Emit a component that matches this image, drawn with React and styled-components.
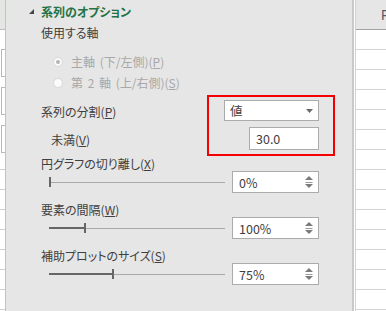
import React from 'react';
import styled, {createGlobalStyle} from 'styled-components';

const GlobalStyle = createGlobalStyle`
    html, body {
        margin: 0;
        padding: 0;
        background: #ffffff;
    }
    body {
        font-family: "Noto Sans CJK JP", "Noto Sans", sans-serif;
        font-feature-settings: "palt";
        color: #404040;
    }
`;

const Screen = styled.div`
    display: flex;
    width: 386px;
    height: 311px;
    overflow: hidden;
`;

/* spreadsheet edge on the left */
const LeftStrip = styled.div`
    width: 5px;
    flex-shrink: 0;
    display: flex;
    flex-direction: column;
    background: #ffffff;
`;

const StripHeader = styled.div`
    height: 29px;
    flex-shrink: 0;
    background: #e4e6e4;
    border-bottom: 1px solid #bdbdbd;
`;

const StripBox = styled.div`
    height: 26px;
    flex-shrink: 0;
    margin-top: ${p => p.$gap}px;
    margin-left: 1px;
    border: 1px solid #b9b9b9;
    border-right: none;
`;

const StripCell = styled.div`
    height: 19px;
    flex-shrink: 0;
    border-bottom: 1px solid #cfcfcf;
`;

/* the format pane */
const Pane = styled.div`
    position: relative;
    flex: 1;
    display: flex;
    flex-direction: column;
    background: #e6e6e6;
    border-left: 1px solid #c3c3c3;
    padding-right: 33px;
    font-size: 12px;
`;

const TitleRow = styled.div`
    height: 22px;
    display: flex;
    align-items: center;
    padding-left: 23px;
    gap: 7px;
`;

const Title = styled.span`
    color: #217346;
    font-weight: bold;
    font-size: 12px;
`;

const Label = styled.div`
    height: ${p => p.$h || 22}px;
    line-height: ${p => p.$h || 22}px;
    margin-top: ${p => p.$mt || 0}px;
    padding-left: ${p => 35 + (p.$indent || 0)}px;
    white-space: nowrap;
    color: ${p => (p.$disabled ? '#a8a8a8' : '#404040')};
`;

const RadioList = styled.div`
    margin-top: 7px;
    display: flex;
    flex-direction: column;
`;

const RadioRow = styled.div`
    height: 21px;
    display: flex;
    align-items: center;
    gap: 8px;
    padding-left: 47px;
    color: #a8a8a8;
    white-space: nowrap;
    word-spacing: 2px;
`;

const RadioDot = styled.span`
    width: 8px;
    height: 8px;
    border-radius: 50%;
    background: #fbfbfb;
    border: 1px solid #d8d8d8;
    display: flex;
    align-items: center;
    justify-content: center;
    &::after {
        content: '';
        width: 4px;
        height: 4px;
        border-radius: 50%;
        background: ${p => (p.$checked ? '#b4b4b4' : 'transparent')};
    }
`;

const FieldRow = styled.div`
    height: ${p => p.$h}px;
    margin-top: ${p => p.$mt || 0}px;
    display: flex;
    align-items: center;
    padding-left: 35px;
`;

const FieldLabel = styled.span`
    flex: 1;
    white-space: nowrap;
    padding-left: ${p => p.$indent || 0}px;
    padding-top: ${p => p.$dy || 0}px;
`;

const Box = styled.div`
    box-sizing: border-box;
    width: ${p => p.$w}px;
    height: 100%;
    background: #ffffff;
    border: 1px solid #ababab;
    display: flex;
    align-items: center;
    justify-content: space-between;
    padding: 0 5px 0 ${p => p.$pl || 6}px;
    font-size: 12.5px;
    color: #404040;
`;

const Group = styled.div`
    margin-top: ${p => p.$mt}px;
    display: flex;
    flex-direction: column;
`;

const SliderRow = styled.div`
    height: 22px;
    margin-top: 1px;
    display: flex;
    align-items: center;
    gap: 7px;
    padding-left: 43px;
`;

const Track = styled.div`
    flex: 1;
    height: 10px;
    display: flex;
    align-items: center;
    position: relative;
    &::before {
        content: '';
        position: absolute;
        left: 0;
        right: 0;
        top: 5px;
        height: 1px;
        background: #a9a9a9;
    }
`;

const Fill = styled.div`
    position: relative;
    height: 2px;
    background: #666666;
`;

const Thumb = styled.div`
    position: relative;
    width: 2px;
    height: 10px;
    background: #666666;
`;

const Highlight = styled.div`
    position: absolute;
    left: 201px;
    top: 95px;
    width: 128px;
    height: 61px;
    box-sizing: border-box;
    border: 2px solid #f40000;
    pointer-events: none;
`;

/* spreadsheet edge on the right */
const RightSheet = styled.div`
    width: 34px;
    flex-shrink: 0;
    display: flex;
`;

const Splitter = styled.div`
    width: 2px;
    background: #c9c9c9;
    border-right: 1px solid #ffffff;
    flex-shrink: 0;
`;

const SplitterLine = styled.div`
    width: 1px;
    background: #d2d2d2;
    flex-shrink: 0;
`;

const Column = styled.div`
    flex: 1;
    display: flex;
    flex-direction: column;
    background: #ffffff;
`;

const ColumnHeader = styled.div`
    height: 29px;
    flex-shrink: 0;
    background: #e6e6e6;
    border-bottom: 1px solid #a3a3a3;
    display: flex;
    align-items: center;
    padding-left: 25px;
    font-family: "Liberation Sans", sans-serif;
    font-size: 14px;
    color: #555b66;
    overflow: hidden;
`;

const Cell = styled.div`
    height: 19px;
    flex-shrink: 0;
    border-bottom: 1px solid #d4d4d4;
`;

const Key = styled.u`
    text-underline-offset: 1px;
`;

function CollapseMark() {
    return (
        <svg width="5" height="5" viewBox="0 0 5 5">
            <polygon points="5,0 5,5 0,5" fill="#454545" />
        </svg>
    );
}

function DropArrow() {
    return (
        <svg width="7" height="4" viewBox="0 0 7 4">
            <polygon points="0,0 7,0 3.5,4" fill="#6a6a6a" />
        </svg>
    );
}

function SpinArrows() {
    return (
        <svg width="8" height="14" viewBox="0 0 8 14">
            <polygon points="0,5 4,1 8,5" fill="#7a7a7a" />
            <rect x="0.5" y="7" width="7" height="1" fill="#9a9a9a" />
            <polygon points="0,9 8,9 4,13" fill="#7a7a7a" />
        </svg>
    );
}

function Slider({label, value, fill, mt}) {
    return (
        <Group $mt={mt}>
            <Label $h={12}>{label}</Label>
            <SliderRow>
                <Track>
                    <Fill style={{width: fill}} />
                    <Thumb />
                </Track>
                <Box $w={87} $pl={6}>
                    <span>{value}</span>
                    <SpinArrows />
                </Box>
            </SliderRow>
        </Group>
    );
}

const sliders = [
    {label: <>円グラフの切り離し(<Key>X</Key>)</>, value: '0%', fill: 0, mt: 8},
    {label: <>要素の間隔(<Key>W</Key>)</>, value: '100%', fill: 35, mt: 11},
    {label: <>補助プロットのサイズ(<Key>S</Key>)</>, value: '75%', fill: 63, mt: 11},
];

export default function App() {
    const leftCells = Array.from({length: 8});
    const rightCells = Array.from({length: 15});
    return (
        <>
            <GlobalStyle />
            <Screen>
                <LeftStrip>
                    <StripHeader />
                    <StripBox $gap={19} />
                    <StripBox $gap={10} />
                    <StripBox $gap={10} />
                    <StripCell style={{height: 16}} />
                    {leftCells.map((_, i) => <StripCell key={i} />)}
                </LeftStrip>

                <Pane>
                    <TitleRow>
                        <CollapseMark />
                        <Title>系列のオプション</Title>
                    </TitleRow>
                    <Label>使用する軸</Label>
                    <RadioList>
                        <RadioRow>
                            <RadioDot $checked />
                            <span>主軸 (下/左側)(<Key>P</Key>)</span>
                        </RadioRow>
                        <RadioRow>
                            <RadioDot />
                            <span>第 2 軸 (上/右側)(<Key>S</Key>)</span>
                        </RadioRow>
                    </RadioList>

                    <FieldRow $h={21} $mt={7}>
                        <FieldLabel $dy={2}>系列の分割(<Key>P</Key>)</FieldLabel>
                        <Box $w={95} $pl={5}>
                            <span>値</span>
                            <DropArrow />
                        </Box>
                    </FieldRow>
                    <FieldRow $h={23} $mt={6}>
                        <FieldLabel $indent={10} $dy={2}>未満(<Key>V</Key>)</FieldLabel>
                        <Box $w={70} $pl={6}>
                            <span>30.0</span>
                        </Box>
                    </FieldRow>

                    {sliders.map((s, i) => (
                        <Slider key={i} {...s} />
                    ))}

                    <Highlight />
                </Pane>

                <RightSheet>
                    <Splitter />
                    <SplitterLine />
                    <Column>
                        <ColumnHeader>F</ColumnHeader>
                        {rightCells.map((_, i) => <Cell key={i} />)}
                    </Column>
                </RightSheet>
            </Screen>
        </>
    );
}
